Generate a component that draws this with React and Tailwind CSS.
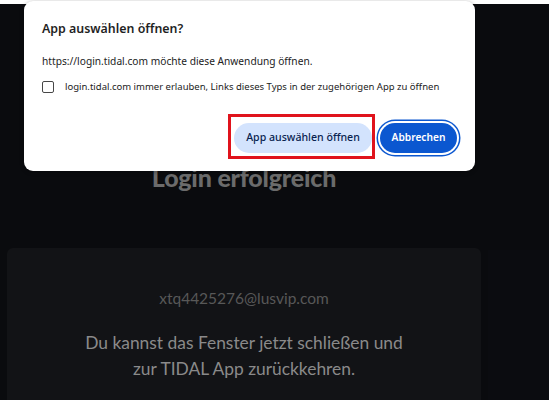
import React from "react";

export default function App() {
  return (
    <div className="relative w-[549px] h-[400px] overflow-hidden bg-[#0a0b0e] font-['Lato',sans-serif]">
      <div className="h-[4px] bg-white" />

      <div className="flex">
        {/* page behind the dialog */}
        <div className="w-[488px] flex flex-col items-center">
          <h1 className="mt-[158px] text-[25px] font-black text-[#6b6b6b] leading-[30px] tracking-[-0.2px]">
            Login erfolgreich
          </h1>
          <div className="mt-[56px] w-[474px] h-[160px] rounded-md bg-[#121316] flex flex-col items-center pt-[40px]">
            <p className="text-[15.5px] text-[#585858] leading-[20px]">xtq4425276@lusvip.com</p>
            <p className="mt-[22px] text-center text-[17.4px] leading-[26px] text-[#8a8a8a]">
              Du kannst das Fenster jetzt schließen und
              <br />
              zur TIDAL App zurückkehren.
            </p>
          </div>
        </div>
        <div className="mt-[246px] flex-1 h-[160px] bg-[#0b0c10]" />
      </div>

      {/* browser dialog */}
      <div className="absolute left-[24px] top-[1px] w-[451px] h-[170px] rounded-[9px] bg-white shadow-[0_1px_4px_rgba(0,0,0,0.35)] px-[18px] pt-[20px] font-['Noto_Sans',sans-serif] text-[#1f1f1f]">
        <h2 className="text-[12.4px] font-semibold leading-[16px]">App auswählen öffnen?</h2>
        <p className="mt-[17px] text-[10.2px] leading-[14px] text-[#222]">
          https://login.tidal.com möchte diese Anwendung öffnen.
        </p>
        <label className="mt-[12px] flex items-center gap-[11px] text-[9.5px] leading-[14px] whitespace-nowrap text-[#222]">
          <span className="w-[12px] h-[12px] rounded-[2px] border-[1.5px] border-[#474747]" />
          login.tidal.com immer erlauben, Links dieses Typs in der zugehörigen App zu öffnen
        </label>
        <div className="mt-[29px] flex items-center justify-end gap-[8px]">
          <button className="h-[30px] w-[138px] rounded-full bg-[#d3e3fd] text-[10.6px] font-medium text-[#0a2350]">
            App auswählen öffnen
          </button>
          <button className="h-[30px] w-[77px] rounded-full bg-[#0b57d0] text-[10.2px] font-semibold text-white shadow-[0_0_0_2px_white,0_0_0_3.5px_#0b57d0]">
            Abbrechen
          </button>
        </div>

        {/* red annotation frame */}
        <div className="absolute left-[204px] top-[113px] w-[147px] h-[45px] border-[3px] border-[#e0131c]" />
      </div>
    </div>
  );
}
